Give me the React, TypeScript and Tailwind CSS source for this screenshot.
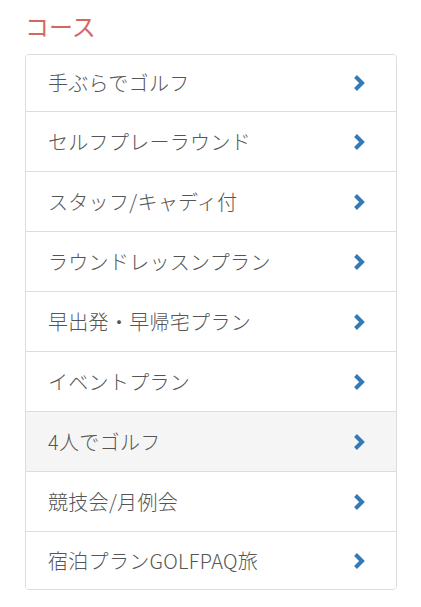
import React from "react";

const courses = [
  "手ぶらでゴルフ",
  "セルフプレーラウンド",
  "スタッフ/キャディ付",
  "ラウンドレッスンプラン",
  "早出発・早帰宅プラン",
  "イベントプラン",
  "4人でゴルフ",
  "競技会/月例会",
  "宿泊プランGOLFPAQ旅",
];

function Chevron() {
  return (
    <svg width="14" height="18" viewBox="0 0 14 18" className="shrink-0">
      <path d="M3.5 2.5 L10 9 L3.5 15.5" fill="none" stroke="#337ab7" strokeWidth="4" strokeLinejoin="miter" />
    </svg>
  );
}

function App() {
  return (
    <div
      className="w-[421px] h-[607px] bg-white px-[25px] pt-[9px]"
      style={{ fontFamily: '"Noto Sans CJK JP", "Noto Sans", sans-serif' }}
    >
      <h2 className="text-[24px] leading-[34px] text-[#d9655f] font-normal">コース</h2>
      <div className="mt-[11px] w-[372px] border border-[#ddd] rounded-[4px] overflow-hidden divide-y divide-[#ddd]">
        {courses.map((c, i) => (
          <div
            key={i}
            className={
              "flex items-center justify-between pl-[22px] pr-[30px] " +
              (i === 0 ? "h-[57px] " : i === 8 ? "h-[57px] " : "h-[60px] ") +
              (i === 6 ? "bg-[#f5f5f5]" : "bg-white")
            }
          >
            <span className="text-[20px] text-[#555] font-light tracking-[0.3px]">{c}</span>
            <Chevron />
          </div>
        ))}
      </div>
    </div>
  );
}

export default App;
